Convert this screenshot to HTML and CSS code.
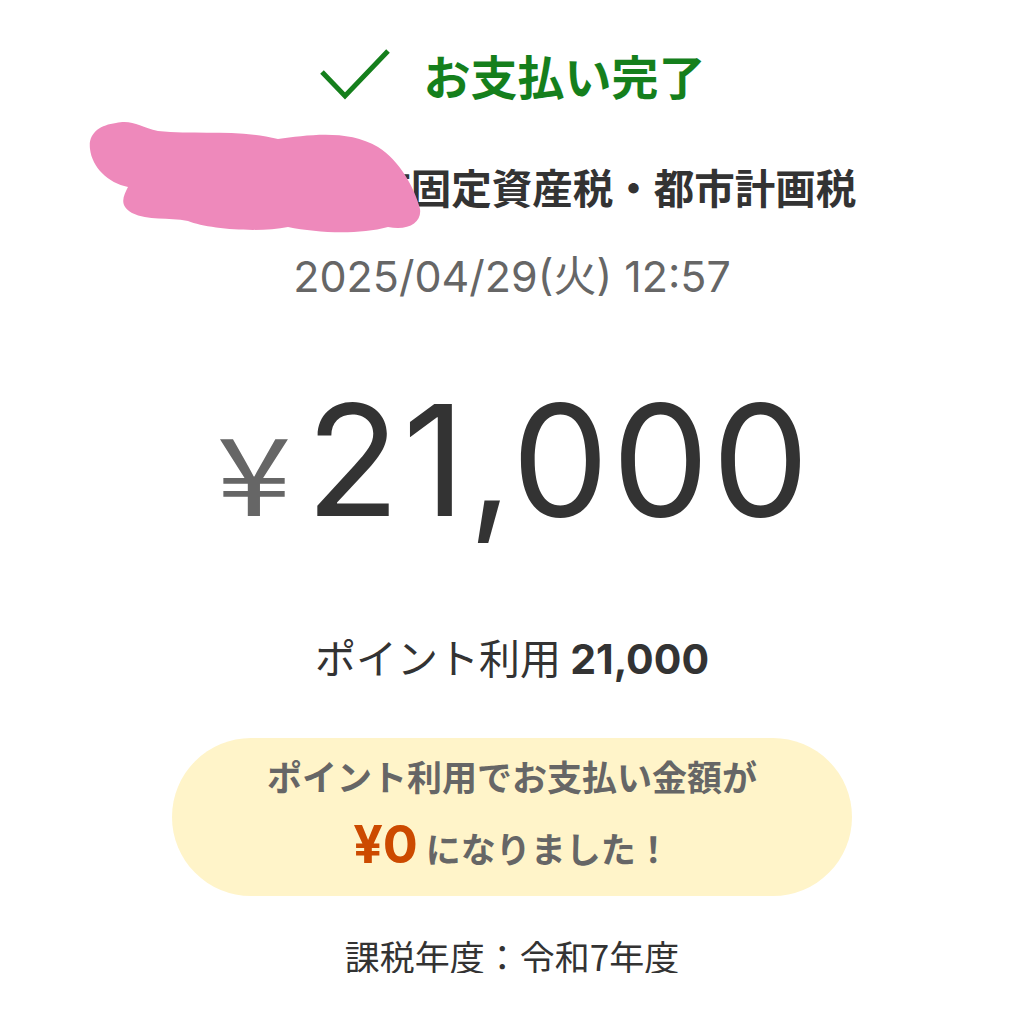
FILE: index.html
```html
<!DOCTYPE html>
<html lang="ja">
<head>
<meta charset="utf-8">
<link rel="stylesheet" href="styles.css">
</head>
<body>
<main class="page">
  <div class="status">
    <svg class="check" width="72" height="52" viewBox="0 0 72 52"><polyline points="3,24 26,48 69,3" fill="none" stroke="#157f1c" stroke-width="5" stroke-linecap="butt" stroke-linejoin="miter"/></svg>
    <span class="status-text">お支払い完了</span>
  </div>
  <div class="title-wrap">
    <h1 class="title">〇〇県〇〇市固定資産税・都市計画税</h1>
    <svg class="blob" width="340" height="124" viewBox="0 0 340 124"><path d="M28 6 C44 2 52 10 70 14 C110 18 150 12 190 22 C220 18 260 12 290 30 C312 44 326 70 332 92 C334 106 320 114 300 110 C270 118 230 116 200 110 C170 116 120 112 100 104 C80 100 60 104 44 96 C30 88 36 78 40 70 C20 66 4 50 2 32 C0 16 12 8 28 6 Z" fill="#ee89bb"/></svg>
  </div>
  <div class="datetime">2025/04/29(火) 12:57</div>
  <div class="amount"><span class="yen">¥</span><span class="num">21,000</span></div>
  <div class="points">ポイント利用 <b>21,000</b></div>
  <div class="notice">
    <div class="notice-line">ポイント利用でお支払い金額が</div>
    <div class="notice-line"><span class="zero">¥0</span> になりました！</div>
  </div>
  <div class="year">課税年度：令和7年度</div>
</main>
</body>
</html>
```

FILE: styles.css
```css
html, body {
  margin: 0;
  padding: 0;
  background: #ffffff;
}
body {
  font-family: "Noto Sans CJK JP", "Noto Sans", sans-serif;
  color: #333333;
}
.page {
  display: flex;
  flex-direction: column;
  align-items: center;
  padding-top: 48px;
}
.status {
  display: flex;
  align-items: center;
  gap: 33px;
  height: 52px;
}
.check {
  display: block;
}
.status-text {
  font-size: 47px;
  font-weight: 700;
  line-height: 1;
  color: #157f1c;
}
.title-wrap {
  position: relative;
  margin-top: 67px;
}
.title {
  margin: 0;
  font-size: 40.5px;
  font-weight: 700;
  line-height: 1;
  color: #333333;
}
.blob {
  position: absolute;
  left: -80px;
  top: -50px;
}
.datetime {
  margin-top: 47px;
  font-family: Inter, "Noto Sans CJK JP", sans-serif;
  font-size: 43px;
  line-height: 1;
  color: #666666;
}
.amount {
  display: flex;
  align-items: baseline;
  gap: 22px;
  margin-top: 85px;
  padding-left: 12px;
  font-family: Inter, "Noto Sans CJK JP", sans-serif;
  line-height: 1;
}
.yen {
  font-family: "Noto Sans CJK JP", sans-serif;
  font-size: 108px;
  font-weight: 400;
  color: #666666;
  transform: scaleX(1.25);
}
.num {
  font-size: 154px;
  color: #333333;
  letter-spacing: 3px;
}
.points {
  margin-top: 99px;
  font-size: 41px;
  line-height: 1;
  color: #333333;
}
.points b {
  font-family: Inter, "Noto Sans CJK JP", sans-serif;
  font-weight: 700;
}
.notice {
  margin-top: 58px;
  width: 680px;
  height: 158px;
  box-sizing: border-box;
  padding-top: 16px;
  border-radius: 79px;
  background: #fff4c9;
  display: flex;
  flex-direction: column;
  align-items: center;
  gap: 25px;
  color: #666666;
  font-weight: 700;
  font-size: 35px;
}
.notice-line {
  line-height: 44px;
  height: 44px;
}
.zero {
  font-family: Inter, "Noto Sans CJK JP", sans-serif;
  color: #cc4a00;
  font-size: 52px;
}
.year {
  margin-top: 42px;
  font-size: 35px;
  line-height: 1;
  color: #333333;
}
```
